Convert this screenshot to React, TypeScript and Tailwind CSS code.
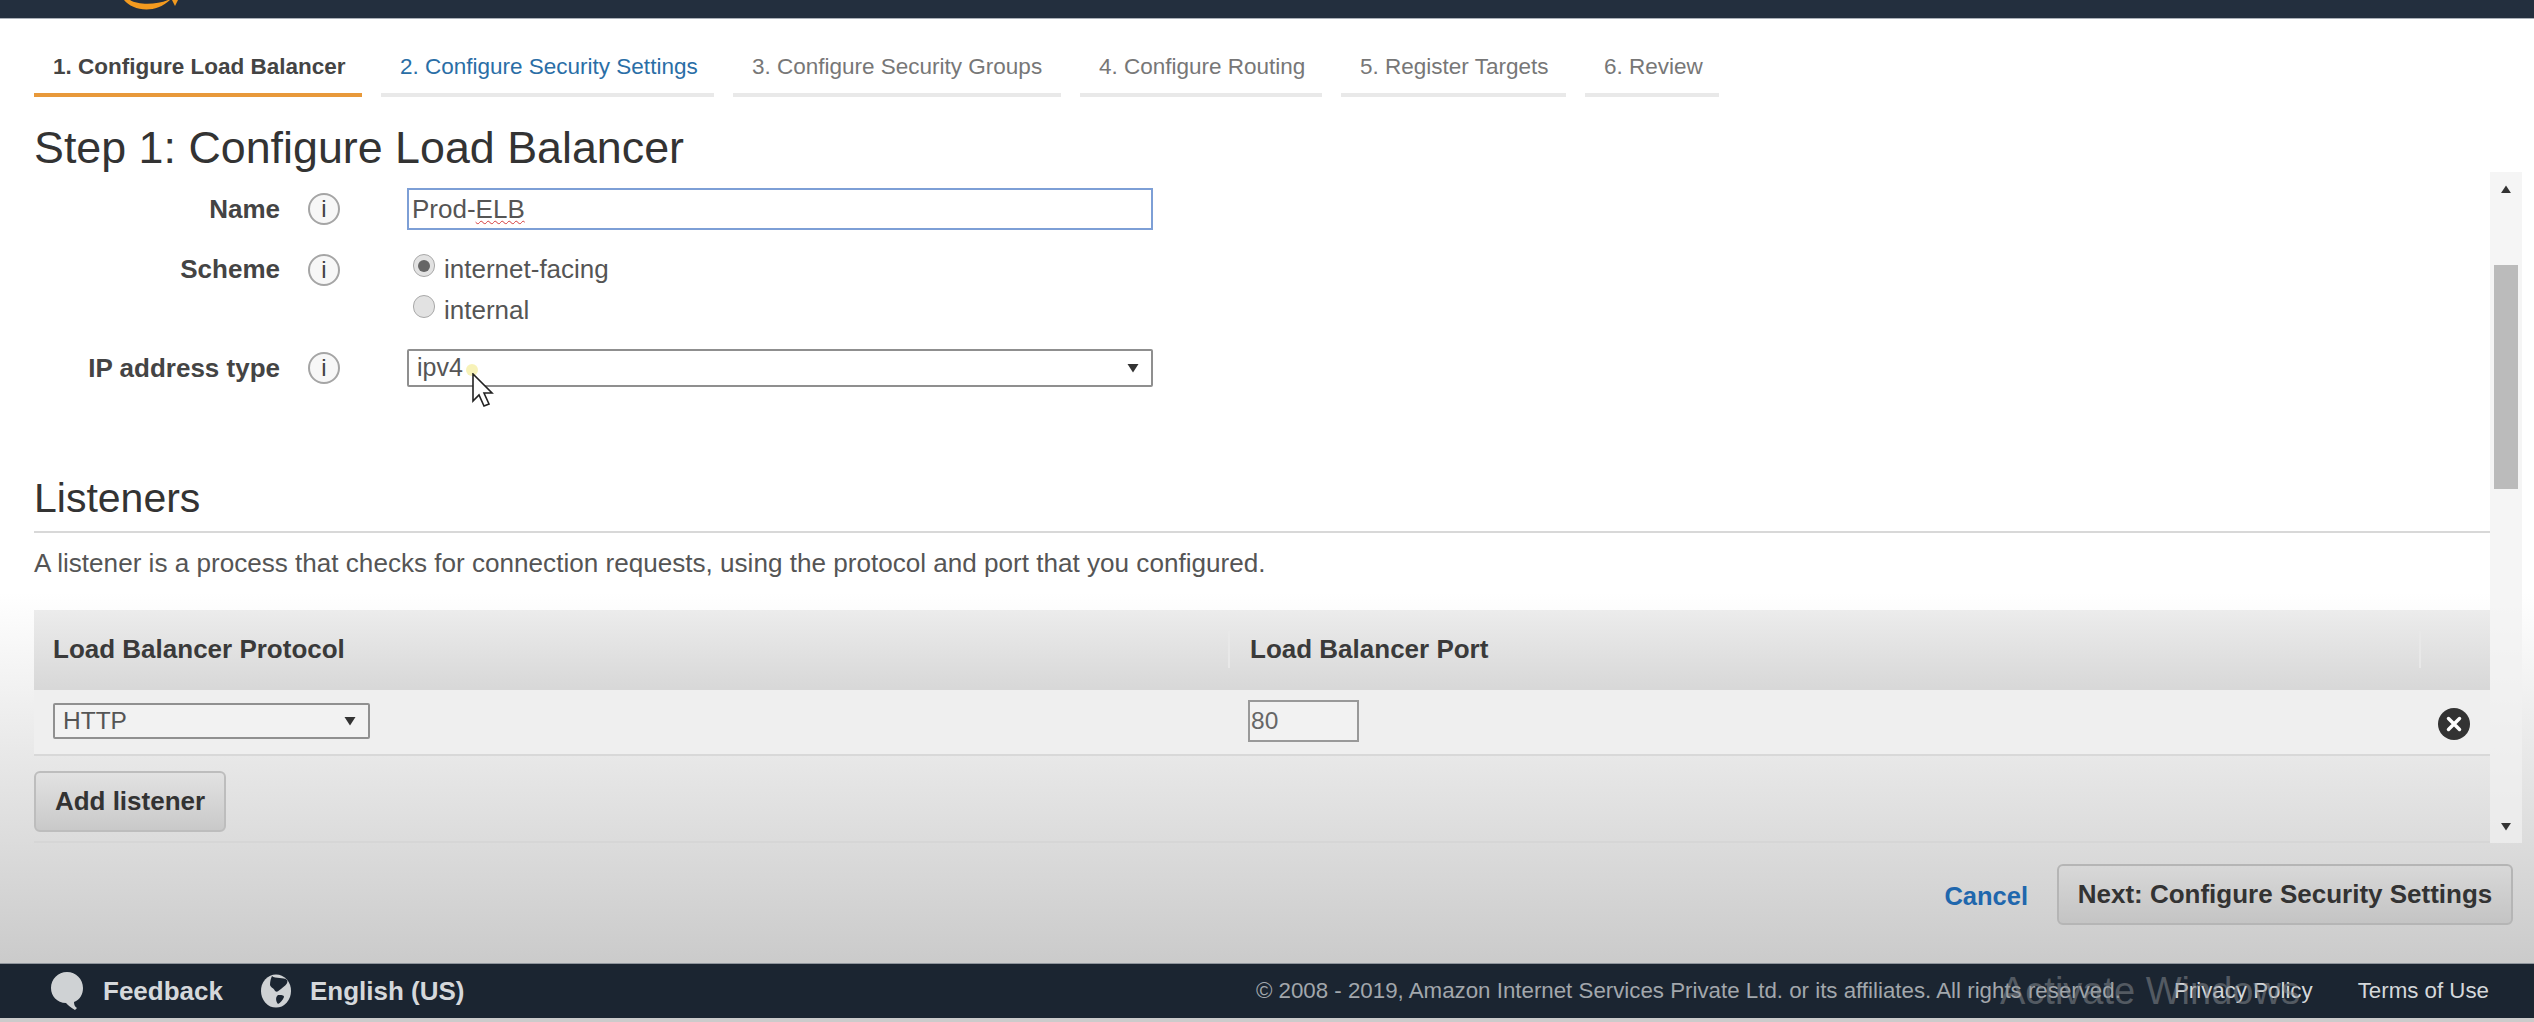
import React from "react";

const tabs = [
  { label: "1. Configure Load Balancer", width: "w-[328px]", state: "active" },
  { label: "2. Configure Security Settings", width: "w-[333px]", state: "next" },
  { label: "3. Configure Security Groups", width: "w-[328px]", state: "" },
  { label: "4. Configure Routing", width: "w-[242px]", state: "" },
  { label: "5. Register Targets", width: "w-[225px]", state: "" },
  { label: "6. Review", width: "w-[134px]", state: "" },
];

function InfoIcon() {
  return (
    <span className="ml-[28px] flex h-[32px] w-[32px] shrink-0 items-center justify-center rounded-full border-2 border-[#a5a5a5] bg-[#f7f7f7] text-[24px] leading-none text-[#444]">
      i
    </span>
  );
}

function Radio({ checked }: { checked?: boolean }) {
  return (
    <span className="mb-[8px] flex h-[23px] w-[22px] shrink-0 items-center justify-center rounded-full border border-[#a8a8a8] bg-[#e2e2e2]">
      {checked && <span className="h-[12px] w-[12px] rounded-full bg-[#666]" />}
    </span>
  );
}

function Arrow({ className }: { className: string }) {
  return (
    <svg viewBox="0 0 12 10" className={className}>
      <path d="M0.5 1h11L6 9.5z" fill="#333" />
    </svg>
  );
}

export default function App() {
  return (
    <div className="flex h-[1022px] w-[2534px] flex-col overflow-hidden bg-[linear-gradient(to_bottom,#ffffff_0%,#ffffff_58%,#cbcbcb_94%)] font-['Liberation_Sans',Arial,sans-serif] text-[#444]">
      {/* aws console header, cut off by the recording */}
      <header className="relative h-[19px] shrink-0 border-b border-[#aab0b8] bg-[#232f3e]">
        <svg viewBox="0 0 60 14" className="absolute left-[122px] top-0 h-[14px] w-[60px]">
          <path d="M2 0c8 10 30 15 46 0l-2 0C34 5 16 5 8 0z" fill="#f29a1f" />
          <path d="M50 0h6l-3 6z" fill="#f29a1f" />
        </svg>
      </header>

      <nav className="ml-[34px] mt-[20px] flex shrink-0 gap-[19px] text-[22.5px] leading-[52px]">
        {tabs.map((t) => (
          <div
            key={t.label}
            className={`${t.width} whitespace-nowrap border-b-4 pl-[19px] pt-[2px] ${
              t.state === "active"
                ? "border-[#e8993a] font-bold text-[#444]"
                : t.state === "next"
                  ? "border-[#e9e9e9] text-[#2a6ea6]"
                  : "border-[#e9e9e9] text-[#777]"
            }`}
          >
            {t.label}
          </div>
        ))}
      </nav>

      <h1 className="ml-[34px] mt-[25px] h-[50px] shrink-0 text-[44.8px] leading-[50px] text-[#333]">
        Step 1: Configure Load Balancer
      </h1>

      {/* scrolling wizard body */}
      <div className="flex h-[671px] shrink-0 items-stretch pl-[34px]">
        <div className="flex w-[2456px] flex-col border-b-2 border-[#d6d6d6]">
          <div className="mt-[16px] flex h-[42px] items-center">
            <span className="w-[246px] text-right text-[26px] font-bold text-[#444]">Name</span>
            <InfoIcon />
            <div className="ml-[67px] flex h-[42px] w-[746px] items-center border-2 border-[#7d9fd6] bg-white pl-[3px] text-[26px] text-[#555]">
              Prod-<span className="underline decoration-[#d43c3c] decoration-wavy decoration-1 underline-offset-2">ELB</span>
            </div>
          </div>

          <div className="mt-[24px] flex items-start">
            <span className="w-[246px] text-right text-[26px] font-bold leading-[30px] text-[#444]">Scheme</span>
            <InfoIcon />
            <div className="ml-[73px] flex flex-col gap-[10px] text-[26px] leading-[31px] text-[#555]">
              <label className="flex items-center gap-[9px]">
                <Radio checked />
                internet-facing
              </label>
              <label className="flex items-center gap-[9px]">
                <Radio />
                internal
              </label>
            </div>
          </div>

          <div className="mt-[23px] flex h-[38px] items-center">
            <span className="w-[246px] text-right text-[26px] font-bold text-[#444]">IP address type</span>
            <InfoIcon />
            <div className="ml-[67px] flex h-[38px] w-[746px] items-center justify-between rounded-[2px] border-2 border-[#8f8f8f] bg-white pl-[8px] pr-[12px] text-[25px] text-[#555]">
              ipv4
              <Arrow className="h-[10px] w-[12px]" />
            </div>
          </div>

          <h2 className="mt-[88px] text-[41px] leading-[46px] text-[#333]">Listeners</h2>
          <div className="mt-[10px] h-[2px] bg-[#d8d8d8]" />
          <p className="mt-[16px] text-[26.1px] leading-[28px] text-[#555]">
            A listener is a process that checks for connection requests, using the protocol and port that you configured.
          </p>

          <div className="mt-[33px] flex h-[78px] items-center bg-[linear-gradient(to_bottom,#ececec,#d8d8d8)] text-[26px] font-bold text-[#3a3a3a]">
            <span className="w-[1194px] pl-[19px]">Load Balancer Protocol</span>
            <span className="h-[37px] w-[2px] bg-[#e8e8e8]" />
            <span className="w-[1189px] pl-[20px]">Load Balancer Port</span>
            <span className="h-[37px] w-[2px] bg-[#e8e8e8]" />
          </div>

          <div className="flex h-[68px] items-center border-b-2 border-t-2 border-[#d8d8d8] bg-[#efefef] pb-[2px]">
            <div className="ml-[19px] flex h-[36px] w-[317px] items-center justify-between rounded-[2px] border-2 border-[#909090] bg-[#f2f2f2] pl-[8px] pr-[12px] text-[24.5px] text-[#555]">
              HTTP
              <Arrow className="h-[10px] w-[12px]" />
            </div>
            <div className="ml-[878px] flex h-[42px] w-[111px] items-center border-2 border-[#999] bg-[#f2f2f2] pl-[1px] text-[24.5px] text-[#666]">
              80
            </div>
            <svg viewBox="0 0 32 32" className="ml-[1079px] mt-[6px] h-[32px] w-[32px]">
              <circle cx="16" cy="16" r="16" fill="#333" />
              <path d="M10.5 10.5l11 11M21.5 10.5l-11 11" stroke="#fff" strokeWidth="3.5" strokeLinecap="round" />
            </svg>
          </div>

          <div className="mt-[15px]">
            <button className="h-[61px] w-[192px] rounded-[6px] border-2 border-[#bdbdbd] bg-[linear-gradient(to_bottom,#e2e2e2,#c9c9c9)] text-[26px] font-bold text-[#333]">
              Add listener
            </button>
          </div>
        </div>

        <div className="flex w-[32px] flex-col items-center bg-[#f1f1f1]/70 pt-[13px]">
          <Arrow className="h-[9px] w-[18px] rotate-180" />
          <div className="mt-[71px] h-[224px] w-[24px] bg-[#bbbbbb]" />
          <Arrow className="mt-auto mb-[12px] h-[9px] w-[18px]" />
        </div>
      </div>

      <div className="flex flex-1 items-start justify-end gap-[29px] pr-[21px] pt-[21px]">
        <span className="mt-[13px] text-[25.5px] font-bold text-[#1f67ad]">Cancel</span>
        <button className="h-[61px] w-[456px] rounded-[6px] border-2 border-[#b5b5b5] bg-[linear-gradient(to_bottom,#d8d8d8,#c4c4c4)] text-[26px] font-bold text-[#333]">
          Next: Configure Security Settings
        </button>
      </div>

      <footer className="relative mb-[4px] flex h-[55px] shrink-0 items-center border-t border-[#8f959c] bg-[#1b2531] pl-[50px] pr-[45px] text-[26px] text-[#d5d8db]">
        <svg viewBox="0 0 34 40" className="h-[40px] w-[34px]">
          <path d="M17 1C8 1 1 8 1 17c0 8 6 15 15 15 2 2 5 5 9 7l2-2c-2-1-3-3-3-6 6-2 9-8 9-14C33 8 26 1 17 1z" fill="#cfd2d4" />
        </svg>
        <span className="ml-[19px] font-bold">Feedback</span>
        <svg viewBox="0 0 30 34" className="ml-[38px] h-[34px] w-[30px]">
          <ellipse cx="15" cy="17" rx="15" ry="16.5" fill="#cfd2d4" />
          <path d="M11 2c3 3 12 1 15 4 2 4-4 7-6 9-2 1-3 4-6 2-1-3-4-3-5-6 0-4 1-7 2-9zM17 21c3 0 6 0 6 2-1 3-4 6-6 7-2-2-3-7 0-9z" fill="#1b2531" />
        </svg>
        <span className="ml-[19px] font-bold">English (US)</span>
        <span className="ml-auto text-[22.3px] text-[#a2a7ac]">
          © 2008 - 2019, Amazon Internet Services Private Ltd. or its affiliates. All rights reserved.
        </span>
        <span className="ml-[53px] text-[22.3px]">Privacy Policy</span>
        <span className="ml-[45px] text-[22.3px]">Terms of Use</span>
        <span className="absolute left-[2000px] top-[-1px] whitespace-nowrap text-[38px] text-[#8b8f94]/50">
          Activate Windows
        </span>
      </footer>

      {/* mouse pointer in the recording, with its yellow click halo */}
      <span className="absolute left-[466px] top-[364px] h-[12px] w-[12px] rounded-full bg-[#f4ec9a]/70" />
      <svg viewBox="0 0 22 36" className="absolute left-[470px] top-[373px] h-[36px] w-[24px]">
        <path d="M2 1v27l6-6 5 11 5-2-5-11h8z" fill="#fff" stroke="#222" strokeWidth="1.6" />
      </svg>
    </div>
  );
}
